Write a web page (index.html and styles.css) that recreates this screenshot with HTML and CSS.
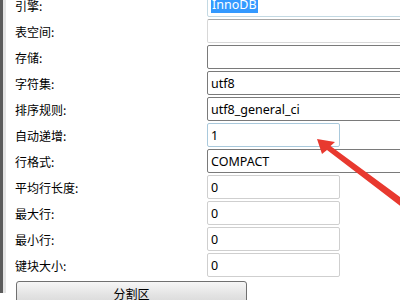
FILE: index.html
```html
<!DOCTYPE html>
<html lang="zh-CN">
<head>
    <meta charset="UTF-8">
    <meta name="viewport" content="width=device-width, initial-scale=1.0">
    <title>表选项</title>
    <link rel="stylesheet" href="styles.css">
</head>
<body>
    <div class="frame">
        <div class="panel">
            <div class="form-grid">
                <div class="label">引擎:</div>
                <div class="field wide soft"><span class="selected">InnoDB</span></div>

                <div class="label">表空间:</div>
                <div class="field wide disabled"></div>

                <div class="label">存储:</div>
                <div class="field wide"></div>

                <div class="label">字符集:</div>
                <div class="field wide">utf8</div>

                <div class="label">排序规则:</div>
                <div class="field wide">utf8_general_ci</div>

                <div class="label">自动递增:</div>
                <div class="field short focus">1</div>

                <div class="label">行格式:</div>
                <div class="field wide">COMPACT</div>

                <div class="label">平均行长度:</div>
                <div class="field short light">0</div>

                <div class="label">最大行:</div>
                <div class="field short light">0</div>

                <div class="label">最小行:</div>
                <div class="field short light">0</div>

                <div class="label">键块大小:</div>
                <div class="field short light">0</div>
            </div>

            <button class="split-btn">分割区</button>
        </div>
    </div>

    <!-- 标注箭头 -->
    <svg class="arrow" width="400" height="300" viewBox="0 0 400 300">
        <polygon fill="#e8392f" points="317,139 335,142 330.5,146 407,202 403,208 327,150 322,154"/>
    </svg>
</body>
</html>
```

FILE: styles.css
```css
html, body {
    margin: 0;
    width: 400px;
    height: 300px;
    overflow: hidden;
    background: #fff;
}

body {
    font-family: "Noto Sans CJK SC", "Noto Sans", sans-serif;
    font-size: 12px;
    color: #000;
    position: relative;
}

.frame {
    border-left: 3px solid #5c5c5c;
    height: 300px;
}

.panel {
    border-left: 3px solid #e4e4e4;
    height: 300px;
    padding-left: 9px;
}

.form-grid {
    display: grid;
    grid-template-columns: 192px 1fr;
    grid-auto-rows: 24px;
    row-gap: 2px;
    margin-top: -7px;
}

.label {
    display: flex;
    align-items: center;
    white-space: nowrap;
}

.field {
    box-sizing: border-box;
    height: 24px;
    border: 1px solid #7a7a7a;
    border-radius: 2px;
    padding-left: 3px;
    display: flex;
    align-items: center;
    font-family: "Noto Sans", "Noto Sans CJK SC", sans-serif;
    font-size: 12.5px;
    white-space: nowrap;
    background: #fff;
}

.field.wide {
    width: 240px;
}

.field.short {
    width: 133px;
}

.field.soft {
    border-color: #c3d9e3;
}

.field.disabled {
    border-color: #d8d8d8;
    border-top-color: #a8a8a8;
}

.field.focus {
    border-color: #a9c9dc;
}

.field.light {
    border-color: #cfcfcf;
}

.selected {
    background: #3399ff;
    color: #fff;
    padding: 0 1px;
    line-height: 16px;
}

.split-btn {
    display: block;
    margin: 4px 0 0 1px;
    width: 231px;
    height: 26px;
    border: 1px solid #707070;
    border-radius: 3px;
    background: linear-gradient(#f6f6f6, #e4e4e4 50%, #d6d6d6);
    font-family: "Noto Sans CJK SC", sans-serif;
    font-size: 12px;
    color: #000;
    padding: 0;
    line-height: 20px;
}

.arrow {
    position: absolute;
    left: 0;
    top: 0;
    pointer-events: none;
}
```
